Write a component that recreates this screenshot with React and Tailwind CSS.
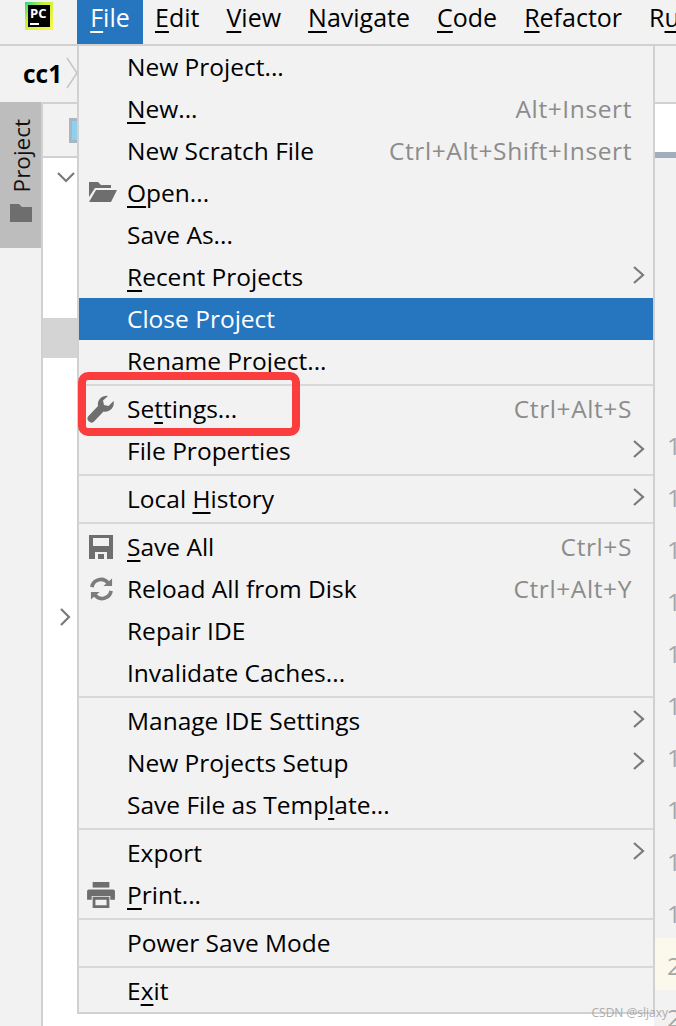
import React from 'react';

const font = 'font-["Open_Sans","Noto_Sans",sans-serif]';

const U = ({ children }) => <span className="underline underline-offset-[4px] decoration-[2px]">{children}</span>;

const Chevron = () => (
  <svg className="-mr-[14px] -mt-[4px]" width="14" height="20" viewBox="0 0 14 20" fill="none" stroke="#7a7a7a" strokeWidth="2.2">
    <path d="M2 2l9 8-9 8" />
  </svg>
);

const FolderOpen = () => (
  <svg className="-mt-[2px] ml-[3px] shrink-0" width="28" height="20" viewBox="0 0 28 20" fill="#6e6e6e">
    <path d="M0 0h9l3 3h10v3H6L0 15z" />
    <path d="M7 8h21l-6 12H0z" />
  </svg>
);

const Wrench = () => (
  <svg className="shrink-0" width="28" height="28" viewBox="0 0 28 28" fill="#6e6e6e">
    <path d="M21 1L16 5.500L17 10L21.500 11L26.500 6A8.500 8.500 0 0 1 16.500 16.500L7.500 26A3.500 3.500 0 0 1 1.500 21L11 11A8.500 8.500 0 0 1 21 1z" />
  </svg>
);

const SaveIcon = () => (
  <svg className="shrink-0" width="24" height="24" viewBox="0 0 24 24" fill="#6e6e6e">
    <path fillRule="evenodd" d="M0 0h24v24H0zM4 3v8h16V3zM6 17v7h12v-7zM9 19h6v5H9z" />
  </svg>
);

const ReloadIcon = () => (
  <svg className="shrink-0" width="25" height="24" viewBox="0 0 26 24" fill="none" stroke="#7c7c7c" strokeWidth="3.800">
    <path d="M3 10a9.500 9.500 0 0 1 17-4" />
    <path d="M23 14a9.500 9.500 0 0 1-17 4" />
    <path d="M15 9h9V1z" fill="#7c7c7c" stroke="none" />
    <path d="M11 15H2v8z" fill="#7c7c7c" stroke="none" />
  </svg>
);

const PrintIcon = () => (
  <svg className="shrink-0" width="28" height="26" viewBox="0 0 30 28" fill="#6e6e6e">
    <path d="M6 0h18v6H6z" />
    <path fillRule="evenodd" d="M2 8h26a2 2 0 0 1 2 2v9h-5v-4H5v4H0v-9a2 2 0 0 1 2-2z" />
    <path fillRule="evenodd" d="M6 16h18v12H6zM9 19v6h12v-6z" />
  </svg>
);

const menu = [
  [
    { label: 'New Project...' },
    { label: <><U>N</U>ew...</>, keys: 'Alt+Insert' },
    { label: 'New Scratch File', keys: 'Ctrl+Alt+Shift+Insert' },
    { label: <><U>O</U>pen...</>, icon: <FolderOpen /> },
    { label: 'Save As...' },
    { label: <><U>R</U>ecent Projects</>, sub: true },
    { label: 'Close Project', active: true },
    { label: 'Rename Project...' },
  ],
  [
    { label: <>Se<U>t</U>tings...</>, keys: 'Ctrl+Alt+S', icon: <Wrench /> },
    { label: 'File Properties', sub: true },
  ],
  [{ label: <>Local <U>H</U>istory</>, sub: true }],
  [
    { label: <><U>S</U>ave All</>, keys: 'Ctrl+S', icon: <SaveIcon /> },
    { label: 'Reload All from Disk', keys: 'Ctrl+Alt+Y', icon: <ReloadIcon /> },
    { label: 'Repair IDE' },
    { label: 'Invalidate Caches...' },
  ],
  [
    { label: 'Manage IDE Settings', sub: true },
    { label: 'New Projects Setup', sub: true },
    { label: <>Save File as Temp<U>l</U>ate...</> },
  ],
  [
    { label: 'Export', sub: true },
    { label: <><U>P</U>rint...</>, icon: <PrintIcon /> },
  ],
  [{ label: 'Power Save Mode' }],
  [{ label: <>E<U>x</U>it</> }],
];

const topMenu = [
  ['E', 'dit'], ['V', 'iew'], ['N', 'avigate'], ['C', 'ode'], ['R', 'efactor'],
];

const lineNumbers = ['1', '1', '1', '1', '1', '1', '1', '1', '1', '1', '2', '2'];

function MenuRow({ item }) {
  return (
    <div className={`h-[42px] flex items-center pl-[48px] pr-[21px] relative ${item.active ? 'bg-[#2675bf] text-white' : 'text-black'}`}>
      {item.icon && <span className="absolute left-[6px] top-0 h-full w-[32px] flex items-center justify-center">{item.icon}</span>}
      <span className="flex-1 whitespace-nowrap">{item.label}</span>
      {item.keys && <span className="text-[#8c8c8c] whitespace-nowrap tracking-[0.6px]">{item.keys}</span>}
      {item.sub && <Chevron />}
    </div>
  );
}

export default function App() {
  return (
    <div className={`relative w-[676px] h-[1026px] overflow-hidden bg-[#f2f2f2] text-[24.5px] ${font}`}>
      {/* title bar */}
      <div className="h-[46px] flex border-b-2 border-[#d1d1d1] text-[25px]">
        <div className="w-[77px] shrink-0 flex items-start pl-[25px] pt-[2px]">
          <div className="w-[28px] h-[28px] bg-[linear-gradient(135deg,#21d789_0%,#c8ee3c_35%,#fcf84a_100%)] p-[3px]">
            <div className="w-full h-full bg-black text-white text-[13px] font-bold leading-none pl-[2px] pt-[2px]">
              PC
              <div className="w-[9px] h-[2px] bg-white mt-[3px]" />
            </div>
          </div>
        </div>
        <div className="w-[66px] shrink-0 bg-[#2675bf] text-white flex items-center justify-center pb-[9px]">
          <span><U>F</U>ile</span>
        </div>
        <div className="flex items-center gap-[27px] pl-[12px] pb-[9px] whitespace-nowrap text-black">
          {topMenu.map(([k, rest]) => (
            <span key={k}><U>{k}</U>{rest}</span>
          ))}
          <span>R<U>u</U></span>
        </div>
      </div>

      {/* breadcrumb */}
      <div className="h-[56px] flex items-center pl-[23px] font-bold">
        <span>cc1</span>
      </div>

      {/* body under the menu */}
      <div className="flex h-[924px] border-t-2 border-[#d1d1d1]">
        <div className="w-[43px] shrink-0 border-r-2 border-[#d1d1d1]">
          <div className="-mt-[2px] h-[146px] bg-[#bdbdbd] flex flex-col items-center justify-end pb-[26px] gap-[12px]">
            <span className="[writing-mode:vertical-rl] rotate-180 leading-none text-[22.5px] text-[#111] ml-[4px]">Project</span>
            <svg width="22" height="18" viewBox="0 0 22 18" fill="#6e6e6e">
              <path d="M0 0h9l3 3h10v15H0z" />
            </svg>
          </div>
        </div>
        <div className="flex-1 flex flex-col bg-white">
          <div className="h-[54px] shrink-0 bg-[#f2f2f2] border-b-2 border-[#d1d1d1] flex items-center pl-[26px]">
            <div className="w-[20px] h-[25px] shrink-0 border-[3px] border-[#a8b6c1] bg-[#8fd0ee]" />
          </div>
          <div className="h-[160px] shrink-0" />
          <div className="h-[40px] shrink-0 bg-[#d4d4d4]" />
        </div>
        <div className="w-[22px] shrink-0 flex flex-col">
          <div className="h-[48px] shrink-0 bg-white" />
          <div className="h-[6px] shrink-0 bg-[#a3adbd]" />
          <div className="flex-1 flex flex-col pt-[260px] text-[#a6a6a6]">
            {lineNumbers.map((n, i) => (
              <div key={i} className={`h-[52px] shrink-0 leading-[56px] pl-[13px] ${i === 10 ? 'bg-[#fbf8ec]' : ''}`}>{n}</div>
            ))}
          </div>
        </div>
      </div>

      {/* breadcrumb chevron */}
      <svg className="absolute left-[66px] top-[57px]" width="12" height="32" viewBox="0 0 12 32" fill="none" stroke="#c4c4c4" strokeWidth="1.500">
        <path d="M1 1l10 15-10 15" />
      </svg>

      {/* tree arrows */}
      <svg className="absolute left-[57px] top-[171px]" width="18" height="12" viewBox="0 0 18 12" fill="none" stroke="#7a7a7a" strokeWidth="2.200">
        <path d="M1 2l8 8 8-8" />
      </svg>
      <svg className="absolute left-[59px] top-[607px]" width="12" height="20" viewBox="0 0 12 20" fill="none" stroke="#7a7a7a" strokeWidth="2.200">
        <path d="M2 2l8 8-8 8" />
      </svg>

      {/* File dropdown */}
      <div className="absolute left-[78px] top-[46px] w-[578px] bg-[#f2f2f2] border-x-2 border-b-2 border-[#d1d1d1] -ml-px">
        {menu.map((group, i) => (
          <div key={i} className={i > 0 ? 'mt-[4px] pt-[2px] relative before:absolute before:left-0 before:right-0 before:-top-[2px] before:h-[2px] before:bg-[#d8d8d8]' : ''}>
            {group.map((item, j) => <MenuRow key={j} item={item} />)}
          </div>
        ))}
      </div>

      {/* red annotation around Settings */}
      <div className="absolute left-[78px] top-[372px] w-[222px] h-[64px] border-[8px] border-[#fc3d3d] rounded-[10px]" />

      {/* watermark */}
      <div className="absolute right-[8px] top-[1004px] text-[12px] text-[#9b9b9b] opacity-80">CSDN @sljaxy</div>
    </div>
  );
}
